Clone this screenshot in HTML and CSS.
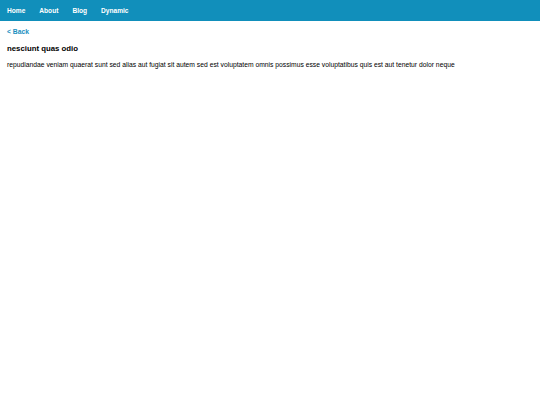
FILE: index.html
```html
<!DOCTYPE html>
<html>
<head>
<meta charset="utf-8">
<link rel="stylesheet" href="styles.css">
</head>
<body>
<nav class="nav">
  <a class="nav-link" href="#">Home</a>
  <a class="nav-link" href="#">About</a>
  <a class="nav-link" href="#">Blog</a>
  <a class="nav-link" href="#">Dynamic</a>
</nav>
<main class="content">
  <a class="back" href="#">&lt; Back</a>
  <h1 class="title">nesciunt quas odio</h1>
  <p class="body">repudiandae veniam quaerat sunt sed alias aut fugiat sit autem sed est voluptatem omnis possimus esse voluptatibus quis est aut tenetur dolor neque</p>
</main>
</body>
</html>
```
FILE: styles.css
```css
html, body {
  margin: 0;
  padding: 0;
  background: #fff;
  font-family: "Liberation Sans", Arial, sans-serif;
}
.nav {
  display: flex;
  align-items: center;
  gap: 14px;
  height: 21px;
  padding: 0 7px;
  background: #118fbb;
}
.nav-link {
  color: #fff;
  font-weight: bold;
  font-size: 6.6px;
  text-decoration: none;
}
.content {
  padding: 0 7px;
}
.back {
  display: block;
  margin-top: 7px;
  color: #1a8fbf;
  font-weight: bold;
  font-size: 6.8px;
  line-height: 8px;
  text-decoration: none;
}
.title {
  margin: 8px 0 0;
  font-size: 7.8px;
  line-height: 10px;
  font-weight: bold;
  color: #000;
}
.body {
  margin: 7px 0 0;
  font-size: 6.75px;
  line-height: 8px;
  color: #000;
}
```
